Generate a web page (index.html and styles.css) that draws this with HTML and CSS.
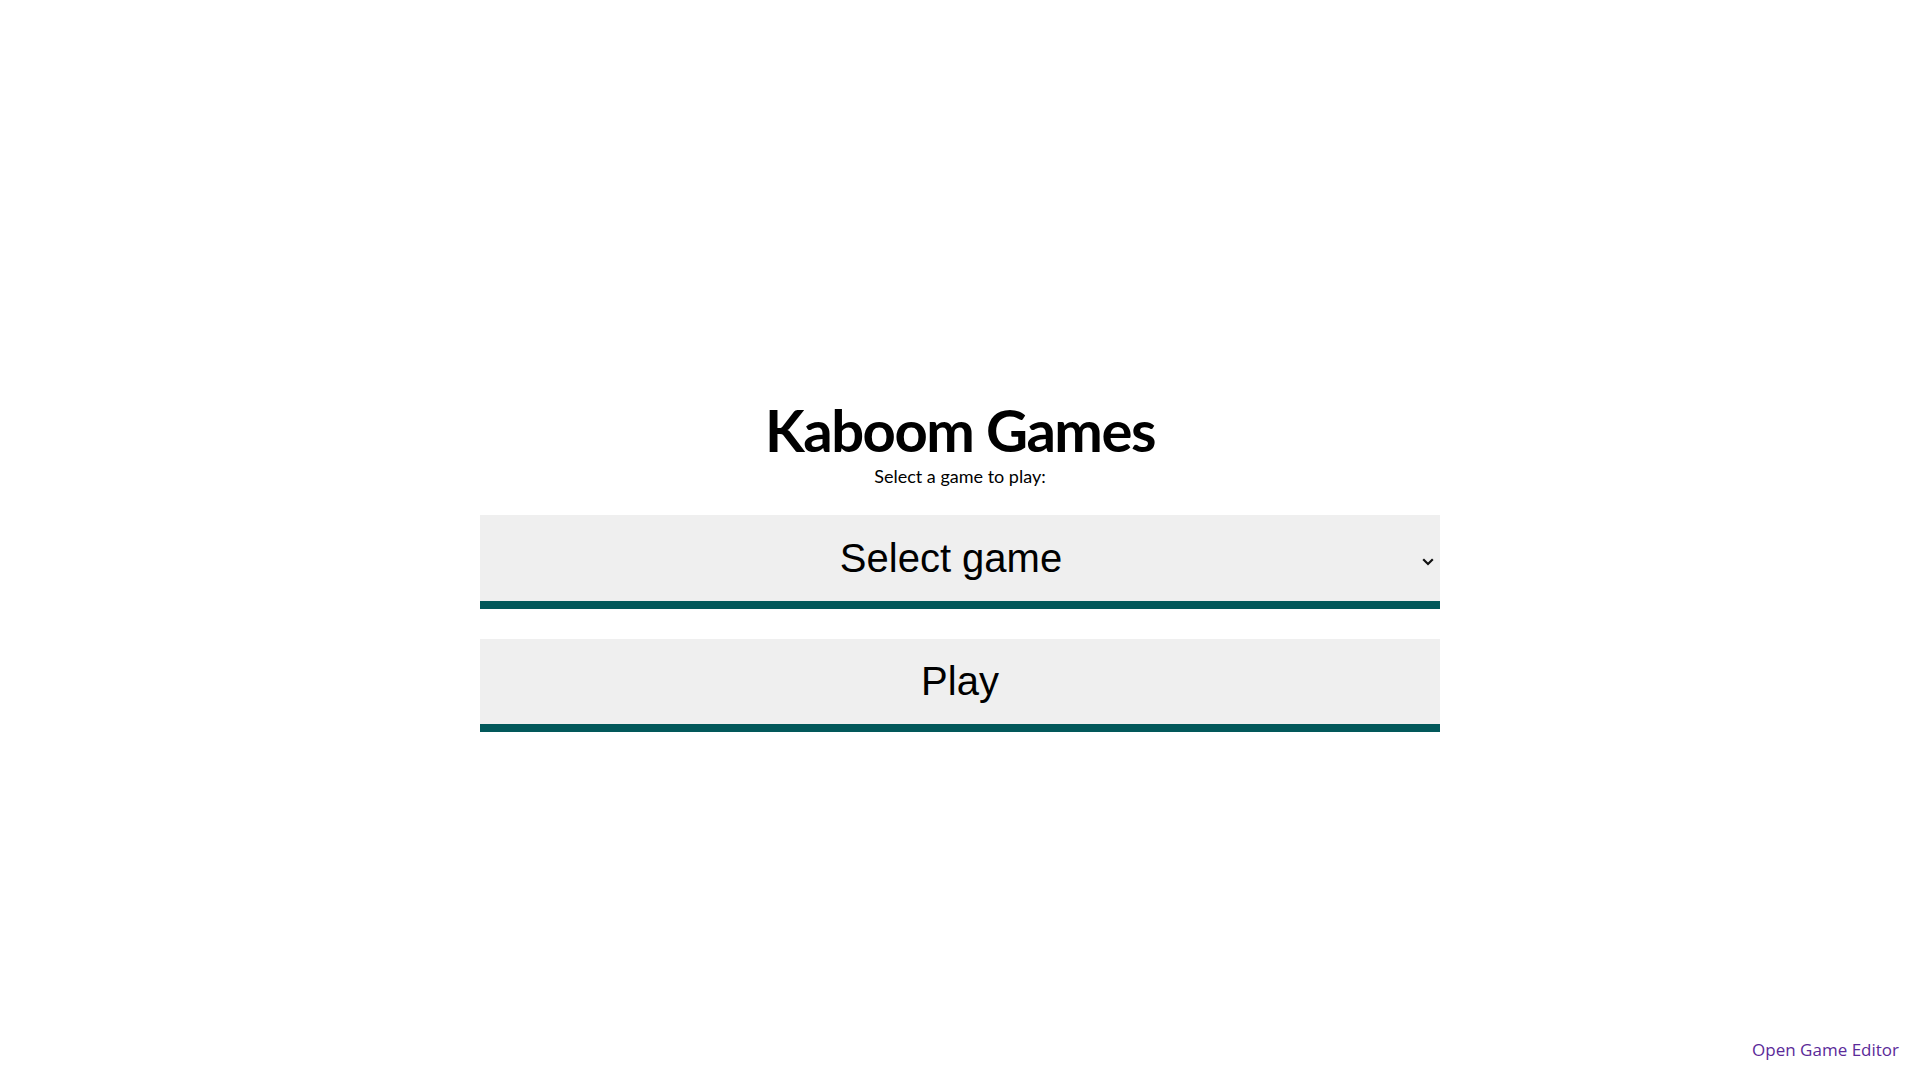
FILE: index.html
```html
<!DOCTYPE html>
<html lang="en">
<head>
<meta charset="utf-8">
<title>Kaboom Games</title>
<link rel="stylesheet" href="styles.css">
</head>
<body>
<main class="menu">
  <h1 class="title">Kaboom Games</h1>
  <p class="subtitle">Select a game to play:</p>
  <div class="select-wrap">
    <select class="game-select">
      <option>Select game</option>
    </select>
    <svg class="chevron" width="12" height="8" viewBox="0 0 12 8" aria-hidden="true">
      <path d="M1.2 1.3 L6 6 L10.8 1.3" fill="none" stroke="#111" stroke-width="2.2"/>
    </svg>
  </div>
  <button class="play-btn" type="button">Play</button>
</main>
<footer class="footer">
  <a class="editor-link" href="#">Open Game Editor</a>
</footer>
</body>
</html>
```
FILE: styles.css
```css
html, body {
  margin: 0;
  padding: 0;
  background: #ffffff;
}
body {
  min-height: 100vh;
  display: flex;
  flex-direction: column;
  font-family: "Lato", "Open Sans", sans-serif;
  color: #000;
}
.menu {
  display: flex;
  flex-direction: column;
  align-items: center;
  padding-top: 395px;
}
.title {
  margin: 0;
  font-family: "Lato", sans-serif;
  font-weight: 700;
  font-size: 58px;
  line-height: 70px;
  letter-spacing: -1.5px;
}
.subtitle {
  margin: 0;
  font-family: "Lato", sans-serif;
  font-size: 18px;
  line-height: normal;
}
.select-wrap {
  position: relative;
  margin-top: 28px;
  width: 960px;
}
.game-select {
  display: block;
  width: 960px;
  height: 94px;
  margin: 0;
  padding: 0 18px 0 0;
  border: 0;
  border-bottom: 8px solid #02585a;
  border-radius: 0;
  background: #efefef;
  -webkit-appearance: none;
  appearance: none;
  font-family: "Liberation Sans", Arial, sans-serif;
  font-size: 40px;
  color: #000;
  text-align: center;
  text-align-last: center;
  outline: none;
}
.chevron {
  position: absolute;
  left: 942px;
  top: 43px;
  pointer-events: none;
}
.play-btn {
  display: block;
  width: 960px;
  height: 93px;
  margin-top: 30px;
  padding: 0;
  border: 0;
  border-bottom: 8px solid #02585a;
  border-radius: 0;
  background: #efefef;
  font-family: "Liberation Sans", Arial, sans-serif;
  font-size: 40px;
  color: #000;
  cursor: pointer;
}
.footer {
  margin-top: auto;
  display: flex;
  justify-content: flex-end;
  padding: 0 21px 18px 0;
}
.editor-link {
  font-family: "Open Sans", sans-serif;
  font-size: 17px;
  line-height: 24px;
  color: #5b2a99;
  text-decoration: none;
}
```
